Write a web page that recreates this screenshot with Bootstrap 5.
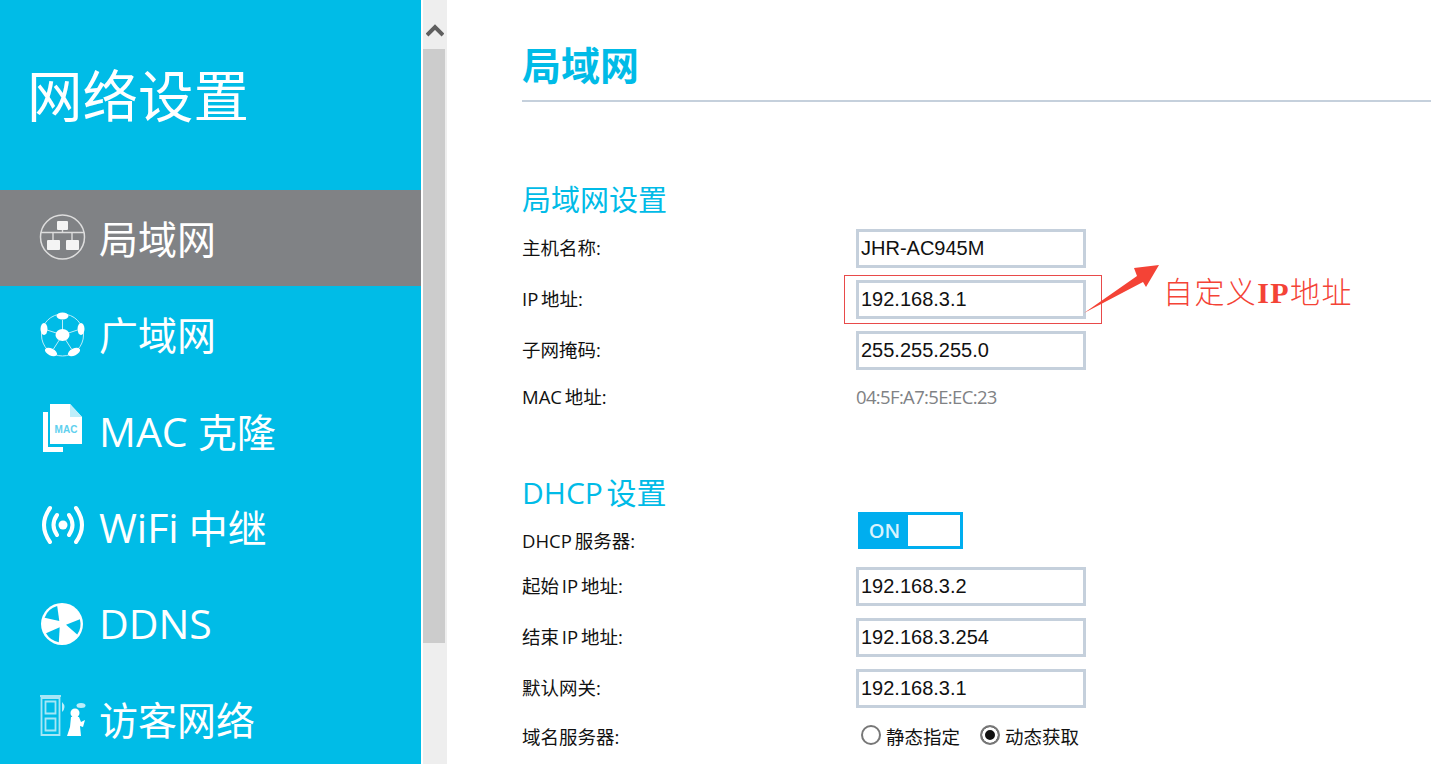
<!DOCTYPE html>
<html lang="zh-CN">
<head>
    <meta charset="UTF-8">
    <meta name="viewport" content="width=device-width, initial-scale=1.0">
    <title>网络设置</title>
    <link href="https://cdn.jsdelivr.net/npm/bootstrap@5.3.0/dist/css/bootstrap.min.css" rel="stylesheet">
    <script src="https://cdn.jsdelivr.net/npm/bootstrap@5.3.0/dist/js/bootstrap.bundle.min.js"></script>
    <style>
        html, body { height: 764px; overflow: hidden; }
        body {
            background: #fff;
            color: #111;
            font-family: "Open Sans", "Noto Sans CJK SC", sans-serif;
        }
        .side-menu { width: 421px; height: 764px; background: #00bce7; color: #fff; flex: none; }
        .side-title { height: 190px; padding: 57px 0 0 27px; font-size: 55.5px; line-height: 78px; font-weight: 400; }
        .side-item { height: 96.2px; padding: 2px 0 0 38px; gap: 13px; font-size: 39px; color: #fff; font-weight: 400; text-decoration: none; white-space: nowrap; }
        .side-item.is-active { background: #808285; }
        .side-icon { width: 48px; height: 48px; flex: none; overflow: visible; }
        .latin-wide { font-size: 41px; }
        .scroll-rail { width: 24px; height: 764px; margin-left: 2px; background: #eee; flex: none; }
        .scroll-up { height: 49px; padding-top: 24px; }
        .scroll-thumb { width: 22px; height: 594px; background: #ccc; }
        .content-pane { padding: 0 0 0 75px; position: relative; }
        .page-title { height: 102px; margin: 0; padding-top: 40px; font-size: 39px; line-height: 50px; font-weight: 700; color: #00bbe7; border-bottom: 2px solid #c5d0dc; }
        .sect-title { margin: 0; font-size: 29px; line-height: 40px; font-weight: 400; color: #00bbe7; white-space: nowrap; }
        .sect-lan { margin-top: 78px; height: 49px; }
        .sect-dhcp { margin-top: 37px; font-size: 30px; height: 39px; word-spacing: -4px; }
        .form-line { height: 51px; align-items: flex-start; }
        .form-label-text { width: 334px; flex: none; font-size: 18.5px; line-height: 38px; white-space: nowrap; word-spacing: -2px; }
        .ip-box { width: 230px; height: 39px; border: 3px solid #c5d0dc; padding: 0 0 0 2px; font: 20px/33px "Liberation Sans", sans-serif; color: #111; background: #fff; outline: 0; }
        .mac-line { height: 54px; }
        .mac-line .form-label-text { line-height: 30px; }
        .mac-value { font-size: 18.5px; line-height: 30px; letter-spacing: -0.65px; color: #808285; }
        .dhcp-switch { width: 105px; height: 37px; margin-left: 2px; background: #00aeef; padding: 3px; color: #d8f3fd; font-size: 20px; line-height: 31px; font-weight: 600; }
        .switch-on { width: 47px; text-align: center; }
        .switch-knob { flex: 1; background: #fff; }
        .switch-line { height: 55px; }
        .switch-line .form-label-text { line-height: 57px; }
        .radio-line { height: 44px; }
        .radio-line .form-label-text { line-height: 34px; }
        .radio-pick { gap: 5px; font-size: 18.5px; line-height: 34px; margin: 0 20px 0 5px; }
        .radio-pick + .radio-pick { margin-left: 0; }
        .radio-dot { width: 20px; height: 20px; border-radius: 50%; border: 2px solid #777; background: #fff; margin-top: -4px; }
        .radio-dot.is-on { box-shadow: inset 0 0 0 3px #fff; background: #111; }
        .note-frame { position: absolute; left: 397px; top: 275px; width: 258px; height: 49px; border: 1px solid #e84a4a; }
        .note-arrow { position: absolute; left: 634px; top: 258px; }
        .note-text { position: absolute; left: 716px; top: 271px; font: 300 30px/44px "Liberation Serif", "Noto Sans CJK SC", serif; letter-spacing: 1.4px; color: #f44336; white-space: nowrap; }
        .note-text b { font-weight: 700; }
    </style>
</head>

<body class="d-flex">
    <!-- 左侧菜单 -->
    <nav class="side-menu">
        <div class="side-title">网络设置</div>
        <a class="side-item is-active d-flex align-items-center" href="#">
            <svg class="side-icon" viewBox="0 0 48 48" fill="none"><circle cx="24.500" cy="22" r="22" stroke="#ddd" stroke-width="1.500"/><path d="M3 17.500h43M24.500 15v2.500M15 17.500v8M34 17.500v8" stroke="#ddd" stroke-width="1.400"/><rect x="19" y="6" width="11" height="9" rx="1" fill="#f4f4f4"/><rect x="9" y="25" width="13" height="10" rx="1" fill="#f4f4f4"/><rect x="28" y="25" width="13" height="10" rx="1" fill="#f4f4f4"/></svg>
            <span>局域网</span>
        </a>
        <a class="side-item d-flex align-items-center" href="#">
            <svg class="side-icon" viewBox="0 0 48 48" fill="#fff"><circle cx="24.500" cy="24" r="21" fill="none" stroke="#bdeefa" stroke-width="1"/><path d="M24.500 24V9M24.500 24 9 19M24.500 24l-9 14M24.500 24l9 14M24.500 24l15-5" stroke="#bdeefa" stroke-width="1"/><ellipse cx="24.500" cy="24" rx="7" ry="6"/><ellipse cx="24.500" cy="5" rx="6" ry="3.500"/><ellipse cx="6" cy="18" rx="3.500" ry="6"/><ellipse cx="43" cy="18" rx="3.500" ry="6"/><ellipse cx="13" cy="41" rx="6.500" ry="3.500" transform="rotate(25 13 41)"/><ellipse cx="36" cy="41" rx="6.500" ry="3.500" transform="rotate(-25 36 41)"/></svg>
            <span>广域网</span>
        </a>
        <a class="side-item d-flex align-items-center" href="#">
            <svg class="side-icon" viewBox="0 0 48 48" fill="#fff"><path d="M5 5h5v35h15v5H5z"/><path d="M12-3h20l12 13v27H12z"/><path d="M32-3v13h12z" fill="#bdeefa"/><text x="28" y="26" text-anchor="middle" font-family="Liberation Sans" font-size="10" font-weight="700" fill="#5fd0ee">MAC</text></svg>
            <span><span class="latin-wide">MAC</span> 克隆</span>
        </a>
        <a class="side-item d-flex align-items-center" href="#">
            <svg class="side-icon" viewBox="0 0 48 48" fill="none" stroke="#fff" stroke-width="4" stroke-linecap="round"><circle cx="25" cy="21" r="4.500" fill="#fff" stroke="none"/><path d="M19 11Q12 21 19 31M31 11Q38 21 31 31M12 4Q0 21 12 38M38 4Q50 21 38 38"/></svg>
            <span><span class="latin-wide">WiFi</span> 中继</span>
        </a>
        <a class="side-item d-flex align-items-center" href="#">
            <svg class="side-icon" viewBox="0 0 48 48"><circle cx="24" cy="24" r="21" fill="#fff"/><g fill="#00bce7"><path d="M21.300 21.100L6.600 17.700A18.500 18.500 0 0 1 19.200 6.100Z"/><path d="M28 24.700L41.900 19.200A18.500 18.500 0 0 1 39.200 34.600Z"/><path d="M21.700 27.300L20.800 42.200A18.500 18.500 0 0 1 8 33.300Z"/></g></svg>
            <span class="latin-wide">DDNS</span>
        </a>
        <a class="side-item d-flex align-items-center" href="#">
            <svg class="side-icon" viewBox="0 0 48 48" fill="none"><path d="M2 0h21M3.500 2h18v37h-18zM7.500 5.500h10v12h-10zM7.500 22.500h10v12h-10z" stroke="#a6e6f6" stroke-width="1.800"/><path d="M24 6q5 5 0 10z" fill="#bdeefa"/><circle cx="37" cy="17" r="4.500" fill="#fff"/><path d="M33 21h8l2 5 4-2-2 7-3-1 1 10H29l3-9z" fill="#fff"/><ellipse cx="43" cy="9.500" rx="4.500" ry="2.500" fill="#bdeefa"/></svg>
            <span>访客网络</span>
        </a>
    </nav>

    <!-- 滚动条 -->
    <div class="scroll-rail">
        <div class="scroll-up d-flex justify-content-center">
            <svg width="18" height="13" viewBox="0 0 18 13"><path d="M1 11 9 3l8 8" fill="none" stroke="#5f5f5f" stroke-width="4"/></svg>
        </div>
        <div class="scroll-thumb"></div>
    </div>

    <!-- 主内容 -->
    <main class="content-pane flex-grow-1">
        <h1 class="page-title">局域网</h1>

        <h2 class="sect-title sect-lan">局域网设置</h2>
        <div class="form-line d-flex">
            <span class="form-label-text">主机名称:</span>
            <input class="ip-box" type="text" value="JHR-AC945M">
        </div>
        <div class="form-line d-flex">
            <span class="form-label-text">IP 地址:</span>
            <input class="ip-box" type="text" value="192.168.3.1">
        </div>
        <div class="form-line d-flex">
            <span class="form-label-text">子网掩码:</span>
            <input class="ip-box" type="text" value="255.255.255.0">
        </div>
        <div class="form-line mac-line d-flex">
            <span class="form-label-text">MAC 地址:</span>
            <span class="mac-value">04:5F:A7:5E:EC:23</span>
        </div>

        <h2 class="sect-title sect-dhcp">DHCP 设置</h2>
        <div class="form-line switch-line d-flex">
            <span class="form-label-text">DHCP 服务器:</span>
            <div class="dhcp-switch d-flex"><span class="switch-on">ON</span><span class="switch-knob"></span></div>
        </div>
        <div class="form-line d-flex">
            <span class="form-label-text">起始 IP 地址:</span>
            <input class="ip-box" type="text" value="192.168.3.2">
        </div>
        <div class="form-line d-flex">
            <span class="form-label-text">结束 IP 地址:</span>
            <input class="ip-box" type="text" value="192.168.3.254">
        </div>
        <div class="form-line d-flex">
            <span class="form-label-text">默认网关:</span>
            <input class="ip-box" type="text" value="192.168.3.1">
        </div>
        <div class="form-line radio-line d-flex">
            <span class="form-label-text">域名服务器:</span>
            <label class="radio-pick d-flex align-items-center"><span class="radio-dot"></span>静态指定</label>
            <label class="radio-pick d-flex align-items-center"><span class="radio-dot is-on"></span>动态获取</label>
        </div>

        <!-- 红色标注 -->
        <div class="note-frame"></div>
        <svg class="note-arrow" width="90" height="60" viewBox="0 0 90 60"><path d="M3 55 56 18l-3-8 25-3-13 22-3-5z" fill="#f44336"/></svg>
        <div class="note-text">自定义<b>IP</b>地址</div>
    </main>
</body>
</html>
